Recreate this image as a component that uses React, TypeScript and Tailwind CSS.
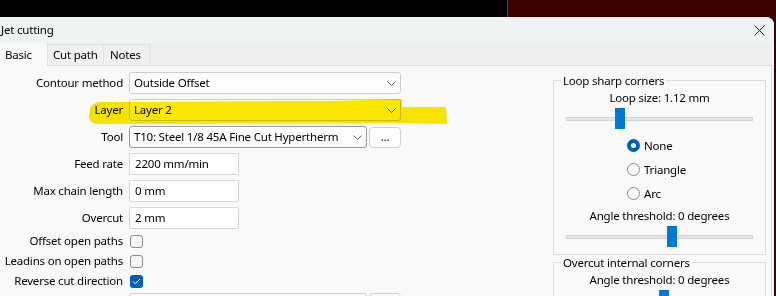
import { ReactNode } from 'react'

const font = { fontFamily: '"Segoe UI", "Noto Sans", "Open Sans", sans-serif' }

function Chevron() {
  return (
    <svg width="9" height="5" viewBox="0 0 9 5" className="shrink-0">
      <path d="M0.5 0.5 L4.5 4.5 L8.5 0.5" fill="none" stroke="#5c5c5c" strokeWidth="1" />
    </svg>
  )
}

function Combo({ value, width, dark }: { value: string; width: string; dark?: boolean }) {
  return (
    <div
      className={`${width} h-[22px] flex items-center justify-between pl-[4px] pr-[4px] rounded-[3px] border bg-[#fdfdfd] ${
        dark ? 'border-[#9a9a9a]' : 'border-[#cccccc]'
      }`}
    >
      <span className="whitespace-nowrap">{value}</span>
      <Chevron />
    </div>
  )
}

function TextInput({ value }: { value: string }) {
  return (
    <div className="w-[110px] h-[22px] flex items-center pl-[5px] bg-white border border-[#d6d6d6] rounded-[2px]">
      {value}
    </div>
  )
}

function CheckBox({ checked }: { checked?: boolean }) {
  if (checked) {
    return (
      <div className="w-[13px] h-[13px] rounded-[3px] bg-[#005fb8] flex items-center justify-center">
        <svg width="9" height="7" viewBox="0 0 9 7">
          <path d="M1 3.5 L3.3 5.8 L8 1" fill="none" stroke="white" strokeWidth="1" />
        </svg>
      </div>
    )
  }
  return <div className="w-[13px] h-[13px] rounded-[3px] border border-[#8a8a8a] bg-[#f6f6f6]" />
}

function Radio({ label, checked }: { label: string; checked?: boolean }) {
  return (
    <div className="h-[24px] flex items-center gap-[4px] pl-[73px]">
      {checked ? (
        <div className="w-[13px] h-[13px] rounded-full bg-[#005fb8] flex items-center justify-center">
          <div className="w-[5px] h-[5px] rounded-full bg-white" />
        </div>
      ) : (
        <div className="w-[13px] h-[13px] rounded-full border border-[#8a8a8a] bg-[#f6f6f6]" />
      )}
      <span>{label}</span>
    </div>
  )
}

function Slider({ thumb }: { thumb: string }) {
  return (
    <div className="relative h-[21px] mx-[12px] flex items-center">
      <div className="w-full h-[4px] bg-[#e6e6e6] border border-[#d2d2d2]" />
      <div className={`absolute top-0 ${thumb} w-[10px] h-[21px] bg-[#0078d4]`} />
    </div>
  )
}

function Row({ label, children }: { label: string; children: ReactNode }) {
  return (
    <div className="flex items-center h-[22px] mb-[5px]">
      <div className="w-[124px] text-right whitespace-nowrap pr-[1px]">{label}</div>
      <div className="ml-[5px] flex items-center gap-[2px]">{children}</div>
    </div>
  )
}

function CheckRow({ label, checked }: { label: string; checked?: boolean }) {
  return (
    <div className="flex items-center h-[20px]">
      <div className="w-[124px] text-right whitespace-nowrap pr-[1px]">{label}</div>
      <div className="ml-[6px]">
        <CheckBox checked={checked} />
      </div>
    </div>
  )
}

export default function App() {
  return (
    <div
      className="relative w-[776px] h-[296px] overflow-hidden text-[11.5px] tracking-[-0.2px] text-black"
      style={font}
    >
      {/* Desktop behind */}
      <div className="flex h-full">
        <div className="w-[507px] bg-black" />
        <div className="w-px bg-[#4a4a4a]" />
        <div className="flex-1 bg-[#3b0000]" />
      </div>

      {/* Dialog window */}
      <div className="absolute left-0 top-[17px] w-[774px] h-[279px] flex flex-col bg-[#f9f9f9] rounded-tr-[8px] overflow-hidden">
        {/* Title bar */}
        <div className="h-[26px] shrink-0 flex items-center justify-between bg-[#eff3f3] pl-[1px] pr-[9px]">
          <span>Jet cutting</span>
          <svg width="11" height="11" viewBox="0 0 11 11">
            <path d="M0.5 0.5 L10.5 10.5 M10.5 0.5 L0.5 10.5" stroke="#1a1a1a" strokeWidth="1" />
          </svg>
        </div>

        {/* Tabs */}
        <div className="h-[23px] shrink-0 flex items-end bg-[#eeeeee] border-b border-[#dddddd] w-[772px]">
          <div className="w-[48px] h-[23px] -mb-px bg-[#f9f9f9] border-r border-[#dddddd] pl-[5px] flex items-center">
            Basic
          </div>
          <div className="w-[56px] h-[21px] bg-[#f0f0f0] border-r border-t border-[#e2e2e2] pl-[5px] flex items-center">
            Cut path
          </div>
          <div className="w-[46px] h-[21px] bg-[#f0f0f0] border-r border-t border-[#e2e2e2] pl-[6px] flex items-center">
            Notes
          </div>
        </div>

        {/* Tab page */}
        <div className="relative flex-1 flex w-[772px] border-r border-[#dcdcdc]">
          {/* Form */}
          <div className="w-[402px] pt-[6px] flex flex-col">
            <Row label="Contour method">
              <Combo value="Outside Offset" width="w-[272px]" />
            </Row>
            <Row label="Layer">
              <Combo value="Layer 2" width="w-[272px]" />
            </Row>
            <Row label="Tool">
              <Combo value="T10: Steel 1/8 45A Fine Cut Hypertherm" width="w-[238px]" dark />
              <div className="w-[32px] h-[21px] flex items-center justify-center rounded-[4px] border border-[#d0d0d0] bg-[#fdfdfd]">
                ...
              </div>
            </Row>
            <Row label="Feed rate">
              <TextInput value="2200 mm/min" />
            </Row>
            <Row label="Max chain length">
              <TextInput value="0 mm" />
            </Row>
            <div className="-mb-[3px]">
              <Row label="Overcut">
                <TextInput value="2 mm" />
              </Row>
            </div>
            <CheckRow label="Offset open paths" />
            <CheckRow label="Leadins on open paths" />
            <CheckRow label="Reverse cut direction" checked />
            <div className="flex items-center h-[22px] mt-[2px]">
              <div className="w-[124px]" />
              <div className="ml-[5px] flex gap-[2px]">
                <div className="w-[238px] h-[22px] rounded-[3px] border border-[#cccccc] bg-[#fdfdfd]" />
                <div className="w-[32px] h-[22px] rounded-[4px] border border-[#d0d0d0] bg-[#fdfdfd]" />
              </div>
            </div>
          </div>

          {/* Right groups */}
          <div className="ml-auto mr-[5px] w-[213px] pt-[6px] flex flex-col">
            <fieldset className="border border-[#dcdcdc] h-[183px] p-0">
              <legend className="ml-[7px] px-[2px]">Loop sharp corners</legend>
              <div className="h-[18px] -mt-[1px] flex items-center justify-center">Loop size: 1.12 mm</div>
              <div className="mt-[2px]">
                <Slider thumb="left-[49px]" />
              </div>
              <div className="mt-[4px]">
                <Radio label="None" checked />
                <Radio label="Triangle" />
                <Radio label="Arc" />
              </div>
              <div className="h-[18px] mt-[1px] flex items-center justify-center">Angle threshold: 0 degrees</div>
              <div className="mt-[2px]">
                <Slider thumb="left-[101px]" />
              </div>
            </fieldset>
            <fieldset className="border border-[#dcdcdc] h-[60px] p-0 -mt-[1px]">
              <legend className="ml-[7px] px-[2px]">Overcut internal corners</legend>
              <div className="h-[18px] -mt-[1px] flex items-center justify-center">Angle threshold: 0 degrees</div>
              <div className="mt-[2px]">
                <Slider thumb="left-[93px]" />
              </div>
            </fieldset>
          </div>
        </div>
      </div>

      {/* Yellow highlighter stroke over the Layer row */}
      <svg
        className="absolute left-[86px] top-[97px] mix-blend-multiply pointer-events-none"
        width="364"
        height="30"
        viewBox="0 0 364 30"
      >
        <path
          d="M4 11 Q6 6 14 5 L244 4 Q284 3 316 2 L316 10 L360 10 L361 27 L316 26 L14 27 Q4 27 3 21 Z"
          fill="#fde800"
        />
      </svg>
    </div>
  )
}
